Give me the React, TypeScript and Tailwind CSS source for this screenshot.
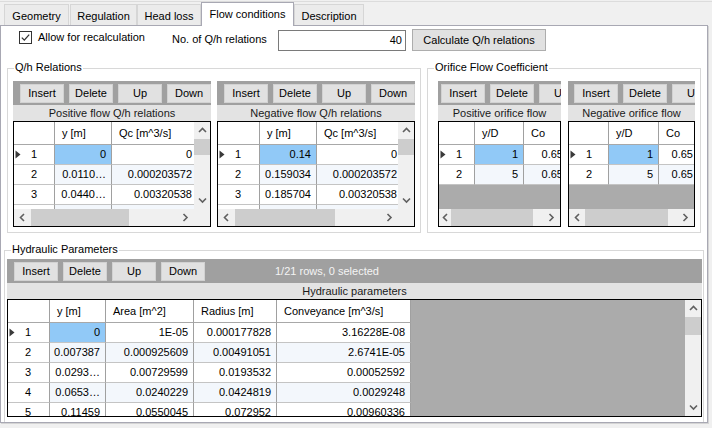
import React from 'react';

type Dir = 'up' | 'down' | 'left' | 'right';

function Chevron({ dir }: { dir: Dir }) {
  const v = dir === 'up' || dir === 'down';
  const pts =
    dir === 'up'
      ? '1,5 4.5,1.5 8,5'
      : dir === 'down'
      ? '1,1.5 4.5,5 8,1.5'
      : dir === 'left'
      ? '5,1 1.5,4.5 5,8'
      : '1.5,1 5,4.5 1.5,8';
  return (
    <svg width={v ? 9 : 7} height={v ? 7 : 9} viewBox={v ? '0 0 9 7' : '0 0 7 9'}>
      <polyline points={pts} fill="none" stroke="#606060" strokeWidth="1.6" />
    </svg>
  );
}

function ToolButton({ label }: { label: string }) {
  return (
    <div className="w-[44px] h-[19px] shrink-0 bg-[#e1e1e1] border border-[#d2d2d2] flex items-center justify-center whitespace-nowrap">
      {label}
    </div>
  );
}

function Toolbar({ labels, pl, extra }: { labels: string[]; pl: string; extra?: React.ReactNode }) {
  return (
    <div className={`h-[24px] bg-[#a0a0a0] flex items-start pt-[3px] gap-[5px] overflow-hidden ${pl}`}>
      {labels.map((l) => (
        <ToolButton key={l} label={l} />
      ))}
      {extra}
    </div>
  );
}

function Caption({ text }: { text: string }) {
  return <div className="h-[16px] bg-[#e3e3e3] flex items-center justify-center text-[#1a1a1a] whitespace-nowrap">{text}</div>;
}

function VScroll({ thumb }: { thumb: string }) {
  return (
    <div className="w-[16px] shrink-0 bg-[#f0f0f0] flex flex-col">
      <div className="h-[17px] shrink-0 flex items-center justify-center">
        <Chevron dir="up" />
      </div>
      <div className={`${thumb} shrink-0 bg-[#cdcdcd]`} />
      <div className="flex-1" />
      <div className="h-[17px] shrink-0 flex items-center justify-center">
        <Chevron dir="down" />
      </div>
    </div>
  );
}

function HScroll({ left, thumb, corner }: { left: string; thumb: string; corner?: boolean }) {
  return (
    <div className="h-[17px] shrink-0 flex bg-[#f0f0f0]">
      <div className={`${left} shrink-0 flex items-center justify-center`}>
        <Chevron dir="left" />
      </div>
      <div className={`${thumb} shrink-0 bg-[#cdcdcd]`} />
      <div className="flex-1" />
      <div className="w-[17px] shrink-0 flex items-center justify-center">
        <Chevron dir="right" />
      </div>
      {corner && <div className="w-[16px] shrink-0" />}
    </div>
  );
}

type Col = { w: string; label: string };

function RowArrow() {
  return (
    <svg width="6" height="9" viewBox="0 0 6 9" className="ml-[1px] mr-[10px] shrink-0">
      <polygon points="0.5,0.5 5.5,4.5 0.5,8.5" fill="#3a3a3a" />
    </svg>
  );
}

function Grid({
  h,
  rh,
  cols,
  rows,
  v,
  hs,
}: {
  h: string;
  rh: string;
  cols: Col[];
  rows: string[][];
  v?: React.ReactNode;
  hs?: React.ReactNode;
}) {
  return (
    <div className={`${h} border border-black flex flex-col bg-white overflow-hidden`}>
      <div className="flex flex-1 min-h-0">
        <div className="flex-1 min-w-0 overflow-hidden bg-[#ababab]">
          <div className="flex h-[23px]">
            <div className={`${rh} shrink-0 bg-white border-r border-b border-r-[#a0a0a0] border-b-[#a8a8a8]`} />
            {cols.map((c) => (
              <div
                key={c.label}
                className={`${c.w} shrink-0 bg-white border-r border-b border-r-[#a0a0a0] border-b-[#a8a8a8] pl-[7px] flex items-center whitespace-nowrap`}
              >
                {c.label}
              </div>
            ))}
          </div>
          {rows.map((r, i) => (
            <div key={i} className="flex h-[20px]">
              <div
                className={`${rh} shrink-0 bg-white border-r border-b border-r-[#a0a0a0] border-b-[#c4c4c4] flex items-center`}
              >
                {r.length > 0 && (i === 0 ? <RowArrow /> : <span className="w-[17px] shrink-0" />)}
                {r.length > 0 && <span>{i + 1}</span>}
              </div>
              {cols.map((c, j) => (
                <div
                  key={j}
                  className={`${c.w} shrink-0 border-r border-b border-r-[#a0a0a0] border-b-[#c4c4c4] flex items-center justify-end pr-[5px] whitespace-nowrap ${
                    i === 0 && j === 0 ? 'bg-[#91c9f7]' : i % 2 === 1 ? 'bg-[#f3f7fc]' : 'bg-white'
                  }`}
                >
                  {r[j] ?? ''}
                </div>
              ))}
            </div>
          ))}
        </div>
        {v}
      </div>
      {hs}
    </div>
  );
}

function Group({
  title,
  className,
  children,
}: {
  title: string;
  className: string;
  children: React.ReactNode;
}) {
  return (
    <div className={`relative border border-[#d8d8d8] shrink-0 ${className}`}>
      <div className="absolute left-[6px] top-[-8px] bg-white px-[1px] leading-[13px] whitespace-nowrap">{title}</div>
      {children}
    </div>
  );
}

function Tab({ label, w, active, ml }: { label: string; w: string; active?: boolean; ml?: string }) {
  if (active) {
    return (
      <div
        className={`${w} h-[24px] mb-[-1px] relative z-10 bg-white border-t border-l border-r border-[#a8a8b3] flex justify-center pt-[5px] shrink-0`}
      >
        {label}
      </div>
    );
  }
  return (
    <div
      className={`${w} ${ml ?? ''} h-[21px] bg-[#ebebeb] border-t border-l border-r border-[#d6d6d6] flex justify-center pt-[5px] shrink-0`}
    >
      {label}
    </div>
  );
}

const qhCols: Col[] = [
  { w: 'w-[57px]', label: 'y [m]' },
  { w: 'w-[86px]', label: 'Qc [m^3/s]' },
];

export default function App() {
  return (
    <div className="w-[712px] h-[428px] bg-[#f0f0f0] overflow-hidden font-['Liberation_Sans',Arial,sans-serif] text-[11px] leading-[13px] text-black">
      <div className="h-[1px]" />
      <div className="h-[1px] bg-[#dcdcdc]" />
      <div className="flex items-end h-[23px] pl-[4px]">
        <Tab label="Geometry" w="w-[65px]" />
        <Tab label="Regulation" w="w-[67px]" ml="ml-[1px]" />
        <Tab label="Head loss" w="w-[64px]" />
        <Tab label="Flow conditions" w="w-[93px]" active />
        <Tab label="Description" w="w-[70px]" />
      </div>
      <div className="w-[708px] h-[398px] border border-[#a8a8b3] bg-white overflow-hidden flex flex-col shadow-[1px_1px_0_0_#d4d4d4]">
        {/* top row */}
        <div className="flex items-start mt-[3px] h-[22px] shrink-0">
          <svg width="13" height="13" viewBox="0 0 13 13" className="ml-[18px] mt-[2px] shrink-0">
            <rect x="0.5" y="0.5" width="12" height="12" fill="#fff" stroke="#333" />
            <polyline points="2.8,6.6 5.3,9.1 10.2,3.6" fill="none" stroke="#333" strokeWidth="1.3" />
          </svg>
          <div className="ml-[6px] w-[134px] mt-[2px] shrink-0">Allow for recalculation</div>
          <div className="w-[106px] mt-[4px] shrink-0">No. of Q/h relations</div>
          <div className="w-[128px] h-[21px] mt-[1px] border border-[#7a7a7a] flex items-center justify-end pr-[3px] shrink-0">
            40
          </div>
          <div className="ml-[6px] w-[134px] h-[22px] bg-[#e1e1e1] border border-[#adadad] flex items-center justify-center shrink-0">
            Calculate Q/h relations
          </div>
        </div>

        {/* groups row */}
        <div className="flex mt-[17px] pl-[6px] shrink-0">
          <Group title="Q/h Relations" className="w-[414px] h-[165px] pt-[12px] pl-[5px]">
            <div className="flex gap-[6px]">
              <div className="w-[198px] shrink-0">
                <Toolbar labels={['Insert', 'Delete', 'Up', 'Down']} pl="pl-[7px]" />
                <Caption text="Positive flow Q/h relations" />
                <Grid
                  h="h-[106px]"
                  rh="w-[41px]"
                  cols={qhCols}
                  rows={[
                    ['0', '0'],
                    ['0.0110…', '0.000203572'],
                    ['0.0440…', '0.00320538'],
                    [],
                  ]}
                  v={<VScroll thumb="h-[16px]" />}
                  hs={<HScroll left="w-[17px]" thumb="w-[98px]" corner />}
                />
              </div>
              <div className="w-[198px] shrink-0">
                <Toolbar labels={['Insert', 'Delete', 'Up', 'Down']} pl="pl-[7px]" />
                <Caption text="Negative flow Q/h relations" />
                <Grid
                  h="h-[106px]"
                  rh="w-[42px]"
                  cols={qhCols}
                  rows={[
                    ['0.14', '0'],
                    ['0.159034', '0.000203572'],
                    ['0.185704', '0.00320538'],
                    [],
                  ]}
                  v={<VScroll thumb="h-[16px]" />}
                  hs={<HScroll left="w-[17px]" thumb="w-[100px]" corner />}
                />
              </div>
            </div>
          </Group>
          <Group title="Orifice Flow Coefficient" className="ml-[6px] w-[274px] h-[165px] pt-[12px] pl-[10px]">
            <div className="flex gap-[7px]">
              <div className="w-[123px] shrink-0">
                <Toolbar labels={['Insert', 'Delete', 'Up']} pl="pl-[3px]" />
                <Caption text="Positive orifice flow" />
                <Grid
                  h="h-[106px]"
                  rh="w-[36px]"
                  cols={[
                    { w: 'w-[49px]', label: 'y/D' },
                    { w: 'w-[45px]', label: 'Co' },
                  ]}
                  rows={[
                    ['1', '0.65'],
                    ['5', '0.65'],
                  ]}
                  hs={<HScroll left="w-[12px]" thumb="w-[82px]" />}
                />
              </div>
              <div className="w-[127px] shrink-0">
                <Toolbar labels={['Insert', 'Delete', 'Up']} pl="pl-[6px]" />
                <Caption text="Negative orifice flow" />
                <Grid
                  h="h-[106px]"
                  rh="w-[40px]"
                  cols={[
                    { w: 'w-[50px]', label: 'y/D' },
                    { w: 'w-[40px]', label: 'Co' },
                  ]}
                  rows={[
                    ['1', '0.65'],
                    ['5', '0.65'],
                  ]}
                  hs={<HScroll left="w-[16px]" thumb="w-[83px]" />}
                />
              </div>
            </div>
          </Group>
        </div>

        {/* hydraulic */}
        <div className="flex mt-[17px] pl-[3px] shrink-0">
          <Group title="Hydraulic Parameters" className="w-[700px] h-[200px] pt-[8px] pl-[2px]">
            <div className="w-[695px]">
              <Toolbar
                labels={['Insert', 'Delete', 'Up', 'Down']}
                pl="pl-[7px]"
                extra={<div className="ml-[65px] self-center mt-[-3px] text-[#f4f4f4] whitespace-nowrap">1/21 rows, 0 selected</div>}
              />
              <Caption text="Hydraulic parameters" />
              <Grid
                h="h-[118px]"
                rh="w-[42px]"
                cols={[
                  { w: 'w-[56px]', label: 'y [m]' },
                  { w: 'w-[88px]', label: 'Area [m^2]' },
                  { w: 'w-[83px]', label: 'Radius [m]' },
                  { w: 'w-[134px]', label: 'Conveyance [m^3/s]' },
                ]}
                rows={[
                  ['0', '1E-05', '0.000177828', '3.16228E-08'],
                  ['0.007387', '0.000925609', '0.00491051', '2.6741E-05'],
                  ['0.0293…', '0.00729599', '0.0193532', '0.00052592'],
                  ['0.0653…', '0.0240229', '0.0424819', '0.0029248'],
                  ['0.11459', '0.0550045', '0.072952', '0.00960336'],
                ]}
                v={<VScroll thumb="h-[18px]" />}
              />
            </div>
          </Group>
        </div>
      </div>
    </div>
  );
}
